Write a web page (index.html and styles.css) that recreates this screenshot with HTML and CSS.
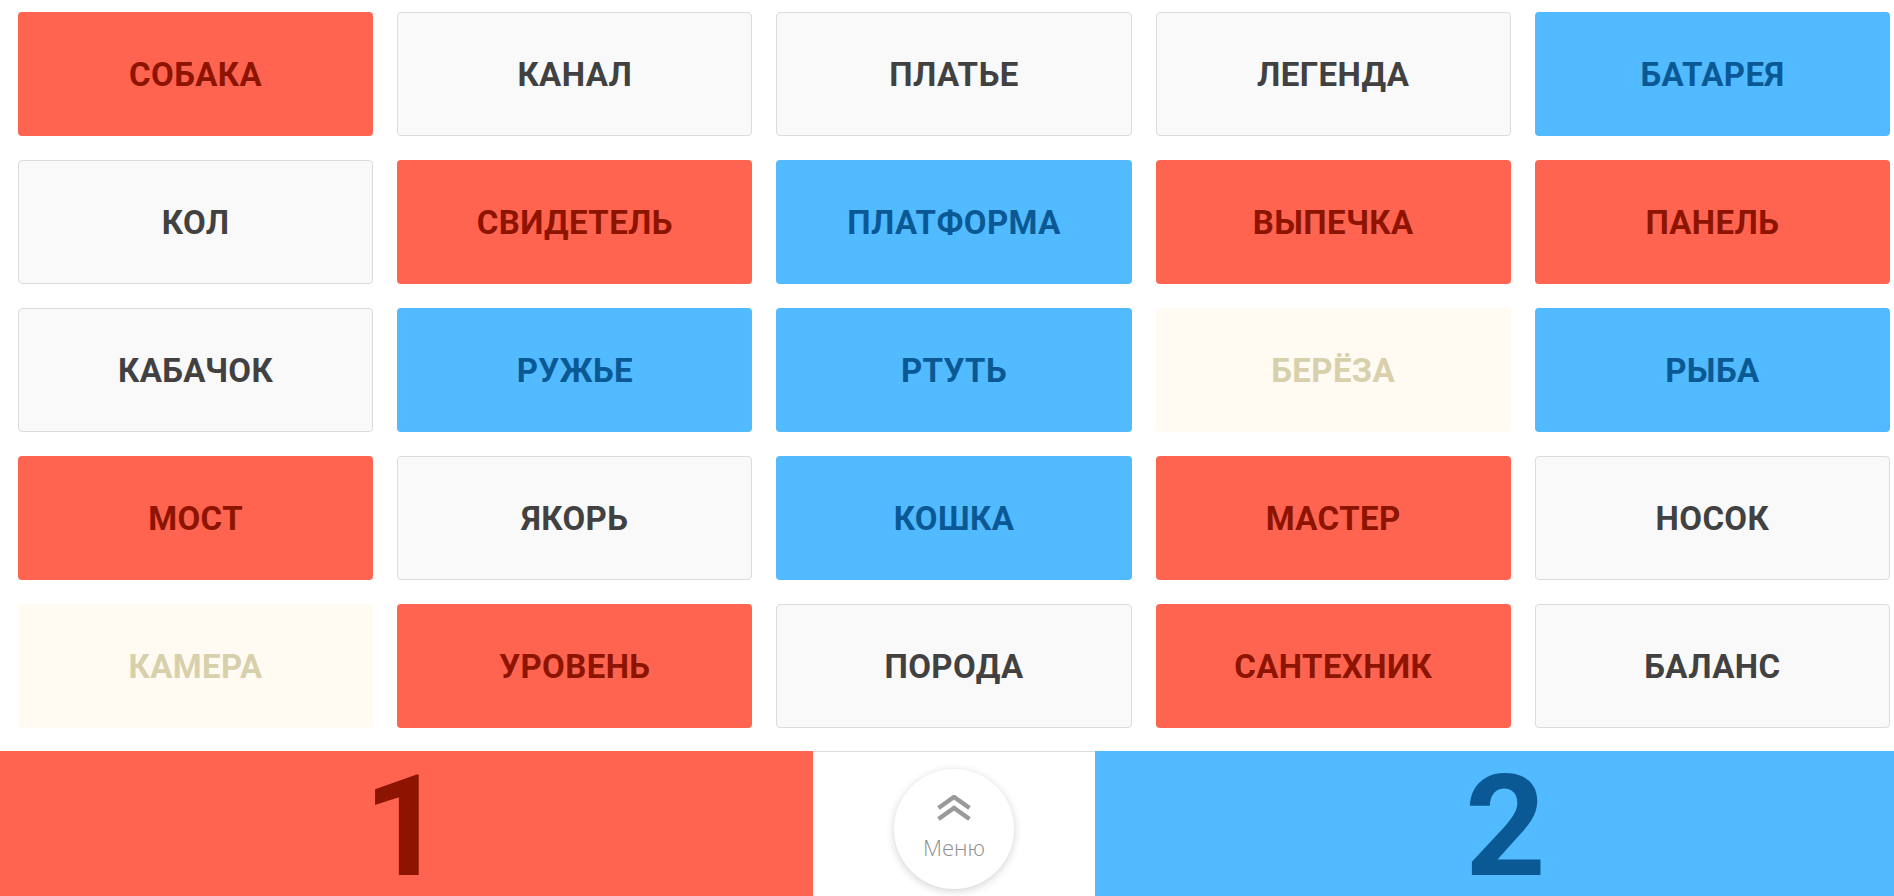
FILE: index.html
```html
<!DOCTYPE html>
<html lang="ru">
<head>
<meta charset="utf-8">
<title>Кодовые имена</title>
<link rel="stylesheet" href="styles.css">
</head>
<body>
<div class="board">
  <div class="card red">СОБАКА</div>
  <div class="card neutral">КАНАЛ</div>
  <div class="card neutral">ПЛАТЬЕ</div>
  <div class="card neutral">ЛЕГЕНДА</div>
  <div class="card blue">БАТАРЕЯ</div>

  <div class="card neutral">КОЛ</div>
  <div class="card red">СВИДЕТЕЛЬ</div>
  <div class="card blue">ПЛАТФОРМА</div>
  <div class="card red">ВЫПЕЧКА</div>
  <div class="card red">ПАНЕЛЬ</div>

  <div class="card neutral">КАБАЧОК</div>
  <div class="card blue">РУЖЬЕ</div>
  <div class="card blue">РТУТЬ</div>
  <div class="card beige">БЕРЁЗА</div>
  <div class="card blue">РЫБА</div>

  <div class="card red">МОСТ</div>
  <div class="card neutral">ЯКОРЬ</div>
  <div class="card blue">КОШКА</div>
  <div class="card red">МАСТЕР</div>
  <div class="card neutral">НОСОК</div>

  <div class="card beige">КАМЕРА</div>
  <div class="card red">УРОВЕНЬ</div>
  <div class="card neutral">ПОРОДА</div>
  <div class="card red">САНТЕХНИК</div>
  <div class="card neutral">БАЛАНС</div>
</div>
<div class="scorebar">
  <div class="score score-red">1</div>
  <div class="menu-wrap">
    <button class="menu-btn" type="button">
      <svg class="chev" width="36" height="26" viewBox="0 0 36 26" aria-hidden="true">
        <path d="M2.5 13 L18 2 L33.5 13" fill="none" stroke="#9a9a9a" stroke-width="4.5"/>
        <path d="M2.5 24 L18 13 L33.5 24" fill="none" stroke="#9a9a9a" stroke-width="4.5"/>
      </svg>
      <span class="menu-label">Меню</span>
    </button>
  </div>
  <div class="score score-blue">2</div>
</div>
</body>
</html>
```
FILE: styles.css
```css
html, body {
  margin: 0;
  padding: 0;
  background: #ffffff;
  overflow: hidden;
}
body {
  width: 1894px;
  height: 896px;
  font-family: Roboto, "Noto Sans", sans-serif;
}
.board {
  display: grid;
  grid-template-columns: repeat(5, 1fr);
  grid-auto-rows: 124px;
  gap: 24px;
  padding: 12px 4px 0 18px;
}
.card {
  display: flex;
  align-items: center;
  justify-content: center;
  border-radius: 4px;
  font-family: Roboto, "Noto Sans", sans-serif;
  font-weight: 700;
  font-size: 33px;
  letter-spacing: 0.4px;
  box-sizing: border-box;
}
.red {
  background: #ff6450;
  color: #8c1400;
}
.blue {
  background: #52baff;
  color: #0a5994;
}
.neutral {
  background: #f9f9f9;
  border: 1px solid #dcdcdc;
  color: #414141;
}
.beige {
  background: #fffbf3;
  color: #d7d0ab;
}
.scorebar {
  display: flex;
  height: 145px;
  margin-top: 23px;
}
.score {
  display: flex;
  align-items: center;
  justify-content: center;
  font-family: Roboto, sans-serif;
  font-weight: 700;
  font-size: 141px;
  line-height: 110px;
  padding-top: 6px;
  box-sizing: border-box;
}
.score-red {
  width: 813px;
  background: #ff6450;
  color: #8c1400;
  padding-right: 5px;
}
.score-blue {
  flex: 1;
  background: #52baff;
  color: #0a5994;
  padding-left: 22px;
}
.menu-wrap {
  width: 282px;
  border-top: 1px solid #dddddd;
  box-sizing: border-box;
  display: flex;
  justify-content: center;
  padding-top: 17px;
  background: #ffffff;
}
.menu-btn {
  width: 120px;
  height: 120px;
  border-radius: 50%;
  border: none;
  background: #ffffff;
  box-shadow: 0 2px 9px rgba(0, 0, 0, 0.18);
  display: flex;
  flex-direction: column;
  align-items: center;
  padding: 26px 0 0;
  margin: 0;
  box-sizing: border-box;
}
.chev {
  display: block;
}
.menu-label {
  font-family: "Open Sans", sans-serif;
  font-weight: 300;
  font-size: 22px;
  line-height: 1;
  color: #8e8e8e;
  margin-top: 15px;
}
```
